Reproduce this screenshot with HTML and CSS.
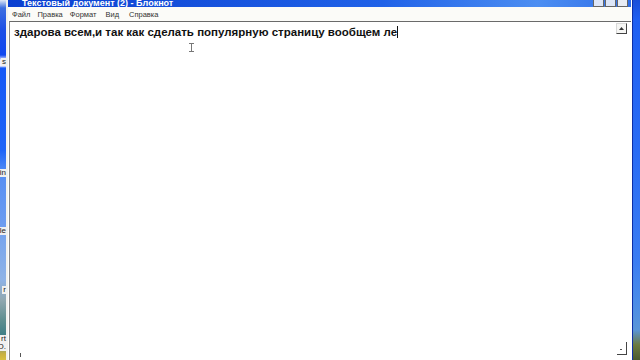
FILE: index.html
```html
<!DOCTYPE html>
<html lang="ru">
<head>
<meta charset="utf-8">
<title>Блокнот</title>
<link rel="stylesheet" href="styles.css">
</head>
<body>
<div class="screen">
  <div class="desk desk-left">
    <span class="lbl l1">s</span>
    <span class="lbl l2">in</span>
    <span class="lbl l3">le</span>
    <span class="lbl l4">r</span>
    <span class="lbl l5">rt</span>
    <span class="lbl l6">O.</span>
  </div>
  <div class="window">
    <div class="titlebar">
      <span class="title">Текстовый документ (2) - Блокнот</span>
      <div class="tbtns">
        <span class="tbtn"></span><span class="tbtn"></span><span class="tbtn close"></span>
      </div>
    </div>
    <div class="menubar">
      <span>Файл</span><span>Правка</span><span>Формат</span><span class="m-vid">Вид</span><span class="m-help">Справка</span>
    </div>
    <div class="edit">
      <div class="textarea">
        <p class="line">здарова всем,и так как сделать популярную страницу вообщем ле<span class="caret"></span></p>
        <span class="ibeam"></span>
        <span class="mark"></span>
      </div>
      <div class="vscroll">
        <span class="arrow"><svg width="5" height="3" viewBox="0 0 5 3"><path d="M0 3 L2.5 0 L5 3 Z" fill="#333"/></svg></span>
        <span class="grip"></span>
      </div>
    </div>
  </div>
  <div class="desk desk-right"></div>
</div>
</body>
</html>
```

FILE: styles.css
```css
html, body {
  margin: 0;
  padding: 0;
}
body {
  width: 640px;
  height: 360px;
  overflow: hidden;
  background: #fff;
  font-family: "Liberation Sans", Arial, sans-serif;
}
.screen {
  display: flex;
  width: 640px;
  height: 360px;
}
.desk {
  position: relative;
  height: 360px;
}
.desk-left {
  width: 6px;
  background: linear-gradient(to bottom,
    #dfe8f6 0px, #3d6fe0 8px, #1c4fe6 30px, #1048f0 55px, #eef 60px, #eef 66px,
    #1558f5 68px, #1e64f7 150px, #4a86f5 168px, #5a90f2 180px,
    #6c9cf0 225px, #7aa6ec 240px, #8fb3e6 280px, #90a8b0 300px,
    #5f8f90 320px, #3f7f86 335px, #7a9a88 345px, #c8b040 354px, #d8c040 360px);
}
.lbl {
  position: absolute;
  right: 0;
  font-size: 8px;
  line-height: 8px;
  color: #222;
  background: #f0f0f0;
  padding: 0 0 0 1px;
}
.l1 { top: 58px; }
.l2 { top: 169px; }
.l3 { top: 227px; }
.l4 { top: 286px; }
.l5 { top: 335px; }
.l6 { top: 343px; }
.desk-right {
  width: 8px;
  background: linear-gradient(to bottom,
    #1a4fd8 0px, #1f5ff2 20px, #2a6cf4 150px, #3b7cf2 260px,
    #4a8be8 300px, #5a95d8 330px, #6b7a40 345px, #4a5a30 360px);
  border-left: 1px solid #0d2fa8;
  box-sizing: border-box;
}
.window {
  flex: 1;
  display: flex;
  flex-direction: column;
  background: #fff;
  border-left: 2px solid #f2f2ee;
  border-right: 1px solid #ffffff;
}
.titlebar {
  height: 7px;
  overflow: hidden;
  display: flex;
  justify-content: space-between;
  align-items: flex-end;
  background: linear-gradient(to right, #0a3fd0 0%, #2062e8 60%, #4c8ef2 85%, #2f6ee8 100%);
}
.title {
  color: #fff;
  font-weight: bold;
  font-size: 9px;
  line-height: 9px;
  margin: 0 0 -1px 14px;
}
.tbtns {
  display: flex;
  gap: 1px;
  margin-right: 3px;
  align-self: stretch;
}
.tbtn {
  width: 9px;
  background: #dde6f8;
  border: 1px solid #666;
  border-top: none;
}
.tbtn.close {
  background: #e8ecf4;
}
.menubar {
  height: 14px;
  display: flex;
  align-items: center;
  gap: 7px;
  padding-left: 4px;
  font-size: 7.5px;
  color: #333;
  background: #fbfbf8;
}
.menubar .m-vid { margin-left: 2px; }
.menubar .m-help { margin-left: 3px; }
.edit {
  flex: 1;
  display: flex;
  border-top: 1px solid #6a6a6a;
  border-left: 1px solid #8a8a8a;
  margin-left: 1px;
}
.textarea {
  position: relative;
  flex: 1;
  padding: 4px 0 0 4px;
}
.line {
  margin: 0;
  font-size: 11.5px;
  font-weight: bold;
  color: #111;
  line-height: 13px;
  white-space: nowrap;
}
.caret {
  display: inline-block;
  width: 1px;
  height: 12px;
  background: #111;
  vertical-align: -2px;
}
.ibeam {
  position: absolute;
  left: 181px;
  top: 21px;
  width: 1px;
  height: 9px;
  background: #777;
}
.ibeam::before, .ibeam::after {
  content: "";
  position: absolute;
  left: -2px;
  width: 5px;
  height: 1px;
  background: #777;
}
.ibeam::before { top: 0; }
.ibeam::after { bottom: 0; }
.mark {
  position: absolute;
  left: 10px;
  bottom: 3px;
  width: 1px;
  height: 4px;
  background: #555;
}
.vscroll {
  width: 14px;
  display: flex;
  flex-direction: column;
  justify-content: space-between;
  align-items: flex-start;
  padding: 1px 0 5px 0;
  border-right: 1px solid #ffffff;
}
.arrow {
  width: 9px;
  height: 9px;
  display: flex;
  align-items: center;
  justify-content: center;
  background: #f6f6f4;
  border: 1px solid #d8d8d8;
  border-right: 1px solid #444;
  border-bottom: 1px solid #444;
}
.grip {
  width: 9px;
  height: 12px;
  margin-left: 1px;
  border-right: 1px solid #444;
  border-bottom: 1px solid #444;
  position: relative;
}
.grip::after {
  content: "";
  position: absolute;
  left: 3px;
  top: 7px;
  width: 2px;
  height: 1px;
  background: #555;
}
```
